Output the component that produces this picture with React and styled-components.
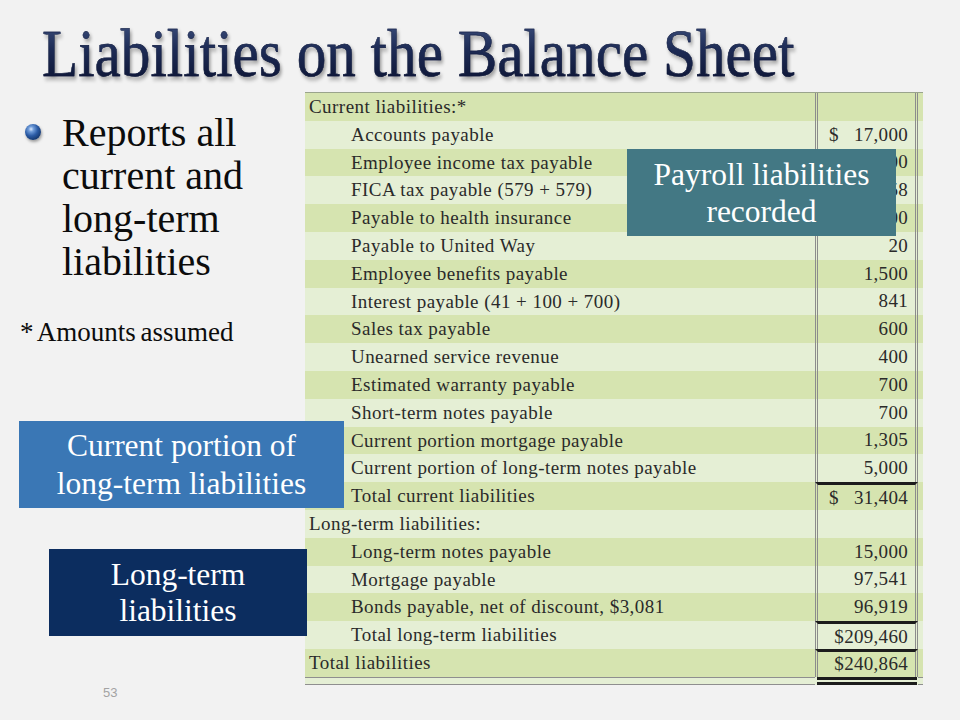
import React from "react";
import styled, { createGlobalStyle } from "styled-components";

const GlobalStyle = createGlobalStyle`
  html, body { margin: 0; padding: 0; background: #f2f2f2; }
`;

const Slide = styled.div`
  position: relative;
  width: 960px;
  height: 720px;
  overflow: hidden;
  background: #f2f2f2;
  font-family: "Liberation Serif", "Times New Roman", serif;
  display: flex;
  flex-direction: column;
`;

const Header = styled.header`
  height: 92px;
  box-sizing: border-box;
  padding: 19px 0 0 42px;
`;

const Title = styled.h1`
  display: inline-block;
  margin: 0;
  font-size: 68px;
  line-height: 68px;
  font-weight: normal;
  white-space: nowrap;
  transform: scaleX(0.87);
  transform-origin: left top;
  background: linear-gradient(180deg, #3f5280 0%, #1d2b55 45%, #0b1230 100%);
  -webkit-background-clip: text;
  background-clip: text;
  color: transparent;
  -webkit-text-stroke: 0.4px #101a3c;
  filter: drop-shadow(2px 3px 2px rgba(0, 0, 0, 0.35));
`;

const Body = styled.div`
  flex: 1;
  display: grid;
  grid-template-columns: 305px 618px;
`;

const LeftColumn = styled.div`
  display: flex;
  flex-direction: column;
  padding: 19px 0 19px 0;
`;

const BulletItem = styled.div`
  display: flex;
  align-items: flex-start;
  gap: 21px;
  padding-left: 25px;
`;

const Bullet = styled.span`
  flex: none;
  width: 16px;
  height: 16px;
  margin-top: 13px;
  border-radius: 50%;
  background: radial-gradient(circle at 38% 32%, #d9e8ff 0%, #6f9bd8 18%, #2c5ca6 45%, #123266 80%, #0a1f44 100%);
  box-shadow: 1px 2px 3px rgba(0, 0, 0, 0.35);
`;

const BulletText = styled.p`
  margin: 0;
  font-size: 40px;
  line-height: 43px;
  color: #0c0c0c;
  width: 200px;
`;

const Note = styled.p`
  margin: 34px 0 0 20px;
  font-size: 27px;
  line-height: 30px;
  color: #0c0c0c;
  word-spacing: -2px;
`;

const PageNumber = styled.div`
  margin-top: auto;
  padding-left: 103px;
  font-family: "Liberation Sans", Arial, sans-serif;
  font-size: 13px;
  line-height: 16px;
  color: #a3a3a3;
`;

const Sheet = styled.div`
  align-self: start;
  border-top: 1px solid #9aa48c;
  font-size: 19px;
  letter-spacing: 0.45px;
  color: #2a2a2a;
`;

const Row = styled.div`
  display: grid;
  grid-template-columns: 510px 103px 5px;
  height: 27.8px;
  background: ${(p) => (p.$dark ? "#d6e4b0" : "#e5efd5")};
`;

const Label = styled.div`
  padding-left: ${(p) => (p.$indent ? "46px" : "4px")};
  line-height: 27.8px;
  white-space: nowrap;
`;

const Amount = styled.div`
  box-sizing: border-box;
  border-left: 3px double #8c8c8c;
  border-right: 3px double #8c8c8c;
  border-top: ${(p) => (p.$rule ? "3px solid #1c1c1c" : "none")};
  display: flex;
  justify-content: space-between;
  align-items: center;
  padding: 0 7px 0 11px;
  line-height: 24px;
  letter-spacing: 0.3px;
`;

const Cell = styled.div``;

const Footer = styled.div`
  display: grid;
  grid-template-columns: 510px 103px 5px;
  height: 8px;
  background: #e5efd5;
`;

const FooterLine = styled.div`
  border-top: 1px solid #8f8f8f;
  border-bottom: 1px solid #8f8f8f;
`;

const FooterAmount = styled.div`
  box-sizing: border-box;
  border-top: 3px solid #1c1c1c;
  border-bottom: 3px solid #1c1c1c;
  margin-right: 1px;
  margin-left: 2px;
`;

const Callout = styled.div`
  position: absolute;
  left: ${(p) => p.$x}px;
  top: ${(p) => p.$y}px;
  width: ${(p) => p.$w}px;
  height: 87px;
  box-sizing: border-box;
  display: flex;
  align-items: center;
  justify-content: center;
  text-align: center;
  background: ${(p) => p.$bg};
  color: #ffffff;
  font-size: 31.5px;
  line-height: ${(p) => p.$lh}px;
`;

const rows = [
  { label: "Current liabilities:*", indent: false },
  { label: "Accounts payable", indent: true, dollar: true, amt: "17,000" },
  { label: "Employee income tax payable", indent: true, amt: "1,200" },
  { label: "FICA tax payable (579 + 579)", indent: true, amt: "1,158" },
  { label: "Payable to health insurance", indent: true, amt: "1,200" },
  { label: "Payable to United Way", indent: true, amt: "20" },
  { label: "Employee benefits payable", indent: true, amt: "1,500" },
  { label: "Interest payable (41 + 100 + 700)", indent: true, amt: "841" },
  { label: "Sales tax payable", indent: true, amt: "600" },
  { label: "Unearned service revenue", indent: true, amt: "400" },
  { label: "Estimated warranty payable", indent: true, amt: "700" },
  { label: "Short-term notes payable", indent: true, amt: "700" },
  { label: "Current portion mortgage payable", indent: true, amt: "1,305" },
  { label: "Current portion of long-term notes payable", indent: true, amt: "5,000" },
  { label: "Total current liabilities", indent: true, dollar: true, amt: "31,404", rule: true },
  { label: "Long-term liabilities:", indent: false },
  { label: "Long-term notes payable", indent: true, amt: "15,000" },
  { label: "Mortgage payable", indent: true, amt: "97,541" },
  { label: "Bonds payable, net of discount, $3,081", indent: true, amt: "96,919" },
  { label: "Total long-term liabilities", indent: true, amt: "$209,460", rule: true },
  { label: "Total liabilities", indent: false, amt: "$240,864", rule: true },
];

export default function App() {
  return (
    <Slide>
      <GlobalStyle />
      <Header>
        <Title>Liabilities on the Balance Sheet</Title>
      </Header>
      <Body>
        <LeftColumn>
          <BulletItem>
            <Bullet />
            <BulletText>Reports all current and long-term liabilities</BulletText>
          </BulletItem>
          <Note>* Amounts assumed</Note>
          <PageNumber>53</PageNumber>
        </LeftColumn>
        <Sheet>
          {rows.map((r, i) => (
            <Row key={i} $dark={i % 2 === 0}>
              <Label $indent={r.indent}>{r.label}</Label>
              <Amount $rule={r.rule}>
                <span>{r.dollar ? "$" : ""}</span>
                <span>{r.amt || ""}</span>
              </Amount>
              <Cell />
            </Row>
          ))}
          <Footer>
            <FooterLine />
            <FooterAmount />
            <FooterLine />
          </Footer>
        </Sheet>
      </Body>
      <Callout $x={627} $y={149} $w={269} $bg="#437884" $lh={37}>
        Payroll liabilities<br />recorded
      </Callout>
      <Callout $x={19} $y={421} $w={325} $bg="#3a77b5" $lh={38}>
        Current portion of<br />long-term liabilities
      </Callout>
      <Callout $x={49} $y={549} $w={258} $bg="#0c2d5f" $lh={36}>
        Long-term<br />liabilities
      </Callout>
    </Slide>
  );
}
